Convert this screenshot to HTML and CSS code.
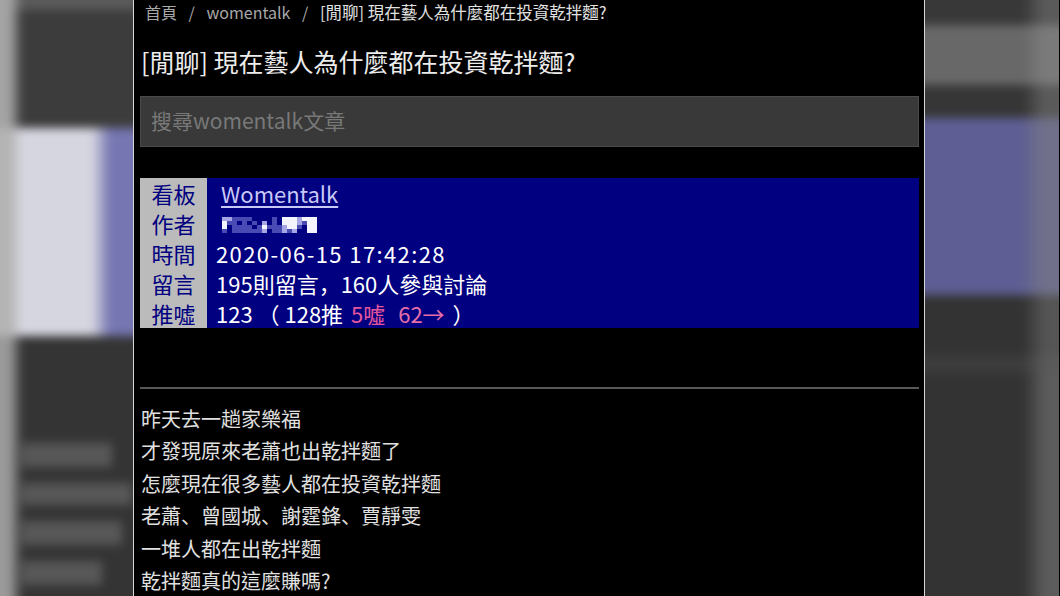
FILE: index.html
```html
<!DOCTYPE html>
<html lang="zh-Hant">
<head>
<meta charset="utf-8">
<title>[閒聊] 現在藝人為什麼都在投資乾拌麵?</title>
<link rel="stylesheet" href="styles.css">
</head>
<body>
<div class="frame">
  <div class="side side-left" aria-hidden="true">
    <div class="blur">
      <div class="lb lb-top"></div>
      <div class="lb lb-dark"></div>
      <div class="lb lb-light"></div>
      <div class="lb lb-bottom">
        <div class="band b1"></div>
        <div class="band b2"></div>
        <div class="band b3"></div>
        <div class="band b4"></div>
      </div>
    </div>
  </div>
  <div class="edge"></div>
  <main class="page">
    <nav class="crumbs">
      <span class="crumb">首頁</span>
      <span class="sep">/</span>
      <span class="crumb">womentalk</span>
      <span class="sep">/</span>
      <span class="crumb-title">[閒聊] 現在藝人為什麼都在投資乾拌麵?</span>
    </nav>
    <h1 class="title">[閒聊] 現在藝人為什麼都在投資乾拌麵?</h1>
    <div class="search">搜尋womentalk文章</div>
    <div class="meta">
      <div class="row"><div class="label">看板</div><div class="value"><a class="board" href="#">Womentalk</a></div></div>
      <div class="row"><div class="label">作者</div><div class="value"><span class="mosaic"><i class="c2"></i><i class="c2"></i><i class="c1"></i><i class="c1"></i><i class="c1"></i><i class="c1"></i><i class="c0"></i><i class="c0"></i><i class="c0"></i><i class="c0"></i><i class="c1"></i><i class="c0"></i><i class="c3"></i><i class="c3"></i><i class="c3"></i><i class="c2"></i><i class="c3"></i><i class="c3"></i><i class="c3"></i><i class="c3"></i><i class="c1"></i><i class="c1"></i><i class="c0"></i><i class="c1"></i><i class="c0"></i><i class="c1"></i><i class="c0"></i><i class="c2"></i><i class="c0"></i><i class="c1"></i><i class="c0"></i><i class="c3"></i><i class="c3"></i><i class="c3"></i><i class="c2"></i><i class="c1"></i><i class="c3"></i><i class="c3"></i><i class="c3"></i><i class="c0"></i><i class="c1"></i><i class="c1"></i><i class="c1"></i><i class="c1"></i><i class="c0"></i><i class="c1"></i><i class="c3"></i><i class="c1"></i><i class="c1"></i><i class="c1"></i><i class="c2"></i><i class="c3"></i><i class="c3"></i><i class="c1"></i><i class="c0"></i><i class="c3"></i><i class="c3"></i><i class="c1"></i><i class="c0"></i><i class="c1"></i><i class="c1"></i><i class="c1"></i><i class="c1"></i><i class="c1"></i><i class="c1"></i><i class="c2"></i><i class="c0"></i><i class="c1"></i><i class="c1"></i><i class="c2"></i><i class="c1"></i><i class="c2"></i><i class="c0"></i><i class="c0"></i><i class="c3"></i><i class="c3"></i></span></div></div>
      <div class="row"><div class="label">時間</div><div class="value"><span class="time">2020-06-15 17:42:28</span></div></div>
      <div class="row"><div class="label">留言</div><div class="value">195則留言<span class="punct" lang="zh-Hans">，</span>160人參與討論</div></div>
      <div class="row"><div class="label">推噓</div><div class="value">123 （ 128推 <span class="boo">5噓</span> <span class="arrow">62→</span> ）</div></div>
    </div>
    <hr class="divider">
    <div class="content">
      <p>昨天去一趟家樂福</p>
      <p>才發現原來老蕭也出乾拌麵了</p>
      <p>怎麼現在很多藝人都在投資乾拌麵</p>
      <p>老蕭<span class="punct" lang="zh-Hans">、</span>曾國城<span class="punct" lang="zh-Hans">、</span>謝霆鋒<span class="punct" lang="zh-Hans">、</span>賈靜雯</p>
      <p>一堆人都在出乾拌麵</p>
      <p>乾拌麵真的這麼賺嗎?</p>
    </div>
  </main>
  <div class="edge"></div>
  <div class="side side-right" aria-hidden="true">
    <div class="blur">
      <div class="rb rb1"></div>
      <div class="rb rb2"></div>
      <div class="rb rb3"></div>
      <div class="rb rb4"></div>
      <div class="rb rb5"></div>
      <div class="rb rb6"></div>
      <div class="rb rb7"></div>
    </div>
  </div>
</div>
</body>
</html>
```

FILE: styles.css
```css
* { box-sizing: border-box; }
html, body {
  margin: 0;
  padding: 0;
  background: #000;
}
body {
  width: 1060px;
  height: 596px;
  overflow: hidden;
  font-family: "Noto Sans CJK TC", "Noto Sans", sans-serif;
}
.frame {
  display: flex;
  width: 1060px;
  height: 596px;
}
.side {
  height: 596px;
  overflow: hidden;
  background: #3a3a3a;
}
.side-left { width: 133px; }
.side-right { width: 134px; }
.blur {
  margin: -12px;
  height: 620px;
  filter: blur(5px);
  display: flex;
  flex-direction: column;
}
.lb { width: 100%; flex: none; }
.lb-top {
  height: 22px;
  background: linear-gradient(to right, #a4a4a4 0 22px, #5a5a5a 34px);
}
.lb-dark {
  height: 118px;
  background: linear-gradient(to right, #a4a4a4 0 22px, #3c3c3c 34px);
}
.lb-light {
  height: 208px;
  background: linear-gradient(to right, #b4b4b4 0 22px, #d6d6e0 34px, #d6d6e0 104px, #7676b2 122px);
}
.lb-bottom {
  flex: 1;
  background: linear-gradient(to right, #9a9a9a 0 22px, #343434 34px);
  display: flex;
  flex-direction: column;
  padding-top: 107px;
  gap: 16px;
}
.band {
  height: 24px;
  margin-left: 34px;
  width: 90px;
  background: #575757;
}
.b2 { width: 110px; height: 22px; }
.b3 { width: 100px; }
.b4 { width: 80px; }

.rb { width: 100%; flex: none; }
.rb1 { height: 37px; background: linear-gradient(to right, #383838 0 110px, #5a5a5a 130px); }
.rb2 { height: 60px; background: linear-gradient(to right, #686868 0 110px, #7a7a7a 130px); }
.rb3 { height: 33px; background: linear-gradient(to right, #363636 0 110px, #5a5a5a 130px); }
.rb4 { height: 177px; background: linear-gradient(to right, #5e5e94 0 108px, #70708a 130px); }
.rb5 { height: 60px; background: linear-gradient(to right, #333 0 110px, #555 132px); }
.rb6 { height: 18px; background: linear-gradient(to right, #3c3c3c 0 110px, #5a5a5a 132px); }
.rb7 { flex: 1; background: linear-gradient(to right, #333 0 110px, #5c5c5c 132px); }

.edge {
  width: 1px;
  height: 596px;
  background: #d8d8d8;
}
.page {
  width: 790px;
  height: 596px;
  background: #000;
  padding: 0 5px 0 6px;
  overflow: hidden;
}
.crumbs {
  height: 24px;
  line-height: 24px;
  padding-left: 5px;
  font-size: 16px;
  color: #a8a8a8;
  white-space: nowrap;
}
.sep { margin: 0 8px; }
.crumb-title {
  color: #e2e2e2;
  font-size: 16.5px;
}
.title {
  margin: 19px 0 0 1px;
  height: 36px;
  line-height: 36px;
  font-size: 25px;
  font-weight: normal;
  color: #ececec;
  white-space: nowrap;
}
.search {
  margin-top: 17px;
  height: 51px;
  background: #393939;
  border: 1px solid #4a4a4a;
  color: #787878;
  font-size: 21px;
  line-height: 47px;
  padding-left: 10px;
}
.meta {
  margin-top: 31px;
  display: flex;
  flex-direction: column;
}
.row {
  display: flex;
  height: 30px;
}
.label {
  width: 67px;
  background: #bbbbbb;
  color: #000080;
  font-size: 22px;
  line-height: 30px;
  text-align: center;
}
.value {
  flex: 1;
  background: #000080;
  color: #fff;
  font-size: 22px;
  line-height: 30px;
  padding-left: 9px;
  white-space: nowrap;
}
.time { letter-spacing: 1.4px; }
.punct { font-family: "Noto Sans CJK SC", "Noto Sans CJK TC", sans-serif; }
.board {
  color: #c8c8f6;
  text-decoration: underline;
  text-underline-offset: 3px;
  margin-left: 5px;
}
.boo { color: #e6559c; margin-left: 3px; }
.arrow { color: #e56ea8; margin-left: 8px; margin-right: 3px; }
.mosaic {
  display: inline-grid;
  grid-template-columns: repeat(19, 5px);
  grid-template-rows: repeat(4, 4px);
  vertical-align: middle;
  margin: -4px 0 0 6px;
}
.mosaic i { display: block; }
.c0 { background: transparent; }
.c1 { background: #4a4ab4; }
.c2 { background: #a6a6e4; }
.c3 { background: #f4f4ff; }
.divider {
  margin: 59px 0 0 0;
  border: 0;
  height: 2px;
  background: #585858;
}
.content {
  margin-top: 14px;
  padding-left: 1px;
  color: #e0e0e0;
  font-size: 20px;
}
.content p {
  margin: 0;
  height: 32.4px;
  line-height: 32.4px;
  white-space: nowrap;
}
```
